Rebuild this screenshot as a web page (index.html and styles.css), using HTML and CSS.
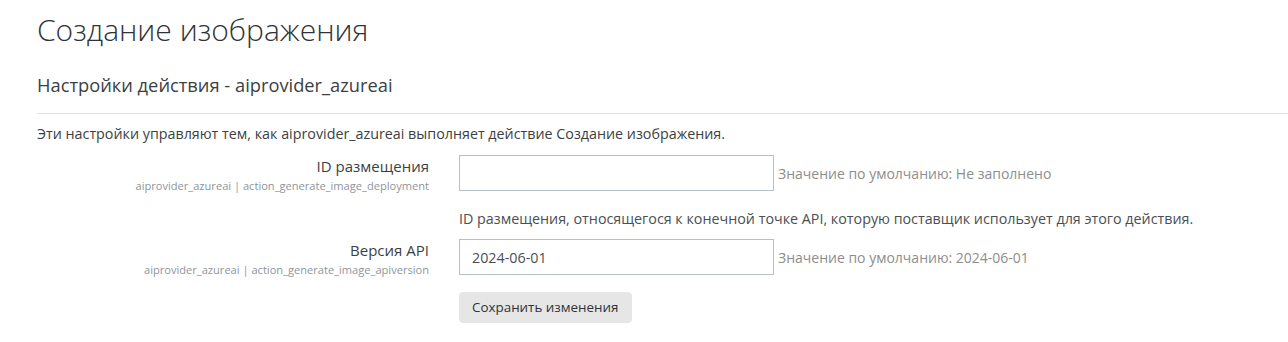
FILE: index.html
```
<!DOCTYPE html>
<html lang="ru">

<head>
    <meta charset="utf-8">
    <meta name="viewport" content="width=device-width, initial-scale=1.0">
    <title>Создание изображения</title>
    <link rel="stylesheet" href="styles.css">
</head>

<body>
    <div class="page">
        <h1 class="page_titel">Создание изображения</h1>
        <h3 class="sektion_titel">Настройки действия - aiprovider_azureai</h3>
        <hr class="skille">
        <p class="intro">Эти настройки управляют тем, как aiprovider_azureai выполняет действие Создание изображения.</p>

        <form class="indstillinger" action="#">
            <!-- ID размещения -->
            <div class="raekke">
                <div class="etiket">
                    <label for="deployment">ID размещения</label>
                    <span class="navn">aiprovider_azureai | action_generate_image_deployment</span>
                </div>
                <div class="felt">
                    <div class="felt_linje">
                        <input id="deployment" class="tekstfelt" type="text" value="">
                        <span class="standard">Значение по умолчанию: Не заполнено</span>
                    </div>
                    <p class="beskrivelse">ID размещения, относящегося к конечной точке API, которую поставщик использует для этого действия.</p>
                </div>
            </div>

            <!-- Версия API -->
            <div class="raekke">
                <div class="etiket">
                    <label for="apiversion">Версия API</label>
                    <span class="navn">aiprovider_azureai | action_generate_image_apiversion</span>
                </div>
                <div class="felt">
                    <div class="felt_linje">
                        <input id="apiversion" class="tekstfelt" type="text" value="2024-06-01">
                        <span class="standard">Значение по умолчанию: 2024-06-01</span>
                    </div>
                </div>
            </div>

            <div class="raekke">
                <div></div>
                <div class="knapper">
                    <button type="submit" class="gem">Сохранить изменения</button>
                </div>
            </div>
        </form>
    </div>
</body></html>
```

FILE: styles.css
```
* {
    box-sizing: border-box;
}

body {
    margin: 0;
    background-color: #fff;
    color: #3b3f44;
    font-family: 'Open Sans', 'Liberation Sans', sans-serif;
    font-size: 14.3px;
}

.page {
    padding-left: 37px;
}

.page_titel {
    font-size: 30px;
    font-weight: 300;
    line-height: 36px;
    margin: 12px 0 0;
    color: #2f3337;
}

.sektion_titel {
    font-size: 18.3px;
    font-weight: 400;
    line-height: 23px;
    margin: 25px 0 0;
}

.skille {
    border: none;
    border-top: 1px solid #dee2e6;
    margin: 17px 0 0;
}

.intro {
    line-height: 22px;
    margin: 9px 0 10px;
}

/* Indstillinger */
.raekke {
    display: grid;
    grid-template-columns: 392px 1fr;
    column-gap: 30px;
}

.etiket {
    display: flex;
    flex-direction: column;
    align-items: flex-end;
    text-align: right;
}

.etiket label {
    font-size: 15px;
    line-height: 22px;
}

.navn {
    font-size: 11.1px;
    line-height: 18px;
    color: #8e959b;
}

.felt_linje {
    display: flex;
    align-items: center;
}

.tekstfelt {
    width: 315px;
    height: 36px;
    padding: 6px 12px;
    border: 1px solid #b8bfc6;
    border-radius: 0;
    font-family: inherit;
    font-size: 14.3px;
    color: #495057;
}

.standard {
    margin-left: 4px;
    font-size: 14px;
    color: #8e8e8e;
}

.beskrivelse {
    line-height: 22px;
    margin: 17px 0 9px;
    color: #4a4f54;
}

.knapper {
    display: flex;
    align-items: flex-start;
    padding-top: 13px;
}

.gem {
    padding: 4px 12px;
    line-height: 21px;
    border: 1px solid #e6e6e6;
    border-radius: 4px;
    background-color: #e6e6e6;
    color: #2f3337;
    font-family: inherit;
    font-size: 13.4px;
    cursor: pointer;
}

.gem:hover {
    background-color: #d4d4d4;
}
```
